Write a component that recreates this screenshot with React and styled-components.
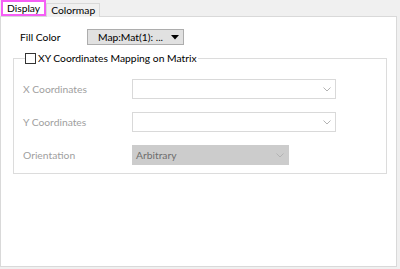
import React from "react";
import styled, { createGlobalStyle } from "styled-components";

const Global = createGlobalStyle`
  html, body { margin: 0; padding: 0; background: #f0f0f0; }
  body { font-family: Lato, "Noto Sans", sans-serif; font-size: 10.3px; color: #000; }
`;

const Page = styled.div`
  width: 400px;
  height: 269px;
  background: #f0f0f0;
  overflow: hidden;
`;

const TabBar = styled.div`
  display: flex;
  align-items: flex-end;
  height: 17px;
  padding-left: 1px;
  position: relative;
  z-index: 1;
`;

const Tab = styled.div`
  box-sizing: border-box;
  height: ${(p) => (p.$active ? "16px" : "14px")};
  padding: 0 ${(p) => (p.$active ? "4px" : "4px")};
  display: flex;
  align-items: center;
  font-size: 10.3px;
  line-height: 1;
  white-space: nowrap;
  background: ${(p) => (p.$active ? "#fff" : "#f0f0f0")};
  border: ${(p) => (p.$active ? "2px solid #f55ef5" : "1px solid #d9d9d9")};
  border-bottom: ${(p) => (p.$active ? "2px solid #f55ef5" : "none")};
  margin-bottom: ${(p) => (p.$active ? "1px" : "0")};
`;

const Panel = styled.div`
  box-sizing: border-box;
  width: 397px;
  height: 251px;
  margin-top: -1px;
  background: #fff;
  border: 1px solid #d9d9d9;
  padding: 12px 0 0 19px;
`;

const FillRow = styled.div`
  display: flex;
  align-items: center;
  height: 16px;
`;

const FillLabel = styled.span`
  width: 67px;
`;

const DropButton = styled.div`
  box-sizing: border-box;
  width: 97px;
  height: 16px;
  background: #e1e1e1;
  border: 1px solid #adadad;
  display: flex;
  align-items: center;
  justify-content: flex-end;
  gap: 8px;
  padding-right: 4px;
  white-space: nowrap;
`;

const Group = styled.fieldset`
  box-sizing: border-box;
  width: 374px;
  height: 123px;
  margin: 6px 0 0 -7px;
  padding: 14px 0 0 9px;
  border: 1px solid #dcdcdc;
  min-width: 0;
`;

const Legend = styled.legend`
  display: flex;
  align-items: center;
  gap: 2px;
  padding: 0 1px 0 0;
  margin-left: 2px;
  line-height: 14px;
  white-space: nowrap;
`;

const CheckBox = styled.span`
  box-sizing: border-box;
  width: 11px;
  height: 11px;
  border: 1px solid #333;
  background: #fff;
  display: inline-block;
`;

const Rows = styled.div`
  display: grid;
  grid-template-columns: 109px auto;
  row-gap: 13px;
  align-items: center;
`;

const Label = styled.span`
  color: #a0a0a0;
  white-space: nowrap;
`;

const Combo = styled.div`
  box-sizing: border-box;
  width: ${(p) => p.$w}px;
  height: 20px;
  background: ${(p) => (p.$disabled ? "#cccccc" : "#fff")};
  border: 1px solid ${(p) => (p.$disabled ? "#cccccc" : "#d9d9d9")};
  display: flex;
  align-items: center;
  justify-content: space-between;
  padding: 0 4px 0 3px;
  color: #6d6d6d;
`;

const Chevron = () => (
  <svg width="8" height="5" viewBox="0 0 8 5">
    <path d="M0.5 0.5 L4 4 L7.5 0.5" fill="none" stroke="#b3b3b3" strokeWidth="1" />
  </svg>
);

const Triangle = () => (
  <svg width="8" height="5" viewBox="0 0 8 5">
    <path d="M0 0 H8 L4 4.5 Z" fill="#000" />
  </svg>
);

export default function App() {
  return (
    <Page>
      <Global />
      <TabBar>
        <Tab $active>Display</Tab>
        <Tab>Colormap</Tab>
      </TabBar>
      <Panel>
        <FillRow>
          <FillLabel>Fill Color</FillLabel>
          <DropButton>
            <span>Map:Mat(1): ...</span>
            <Triangle />
          </DropButton>
        </FillRow>
        <Group>
          <Legend>
            <CheckBox />
            <span>XY Coordinates Mapping on Matrix</span>
          </Legend>
          <Rows>
            <Label>X Coordinates</Label>
            <Combo $w={204}>
              <span />
              <Chevron />
            </Combo>
            <Label>Y Coordinates</Label>
            <Combo $w={204}>
              <span />
              <Chevron />
            </Combo>
            <Label>Orientation</Label>
            <Combo $w={157} $disabled>
              <span>Arbitrary</span>
              <Chevron />
            </Combo>
          </Rows>
        </Group>
      </Panel>
    </Page>
  );
}
